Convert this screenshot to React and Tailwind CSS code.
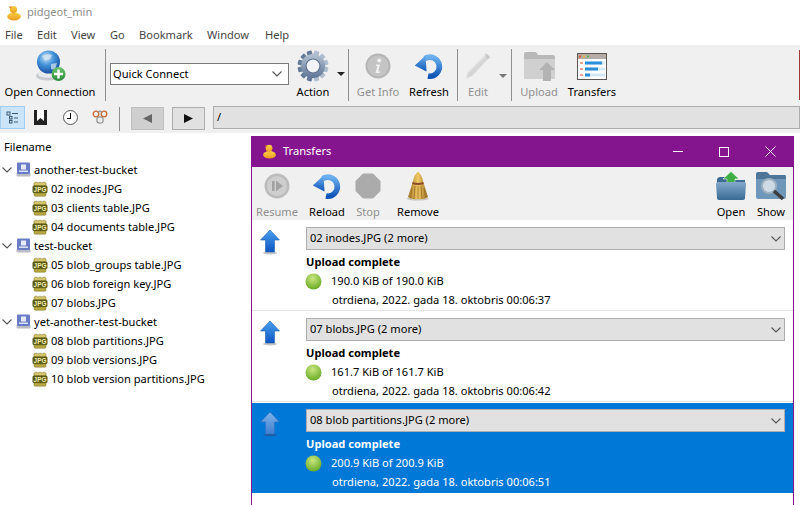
import React from "react";

const font = { fontFamily: '"Noto Sans", "Open Sans", sans-serif' };

function Duck({ size = 16 }) {
  return (
    <svg width={size} height={size} viewBox="0 0 16 16">
      <defs>
        <linearGradient id="duckBody" x1="0" y1="0" x2="0" y2="1">
          <stop offset="0" stopColor="#fbd34b" />
          <stop offset="1" stopColor="#eb9a1c" />
        </linearGradient>
      </defs>
      <ellipse cx="8" cy="11.5" rx="6.8" ry="4" fill="url(#duckBody)" />
      <circle cx="7.5" cy="4.5" r="3.6" fill="url(#duckBody)" />
      <path d="M4.5 3.5 L2.6 1.8 L5.8 1.5 Z" fill="#e2701b" />
      <path d="M6.5 8 L9 8 L9.5 10 L6 10 Z" fill="#f4b830" />
    </svg>
  );
}

function GlobeIcon() {
  return (
    <svg width="32" height="32" viewBox="0 0 32 32">
      <defs>
        <radialGradient id="globeFill" cx="0.4" cy="0.3" r="0.8">
          <stop offset="0" stopColor="#c6e2f7" />
          <stop offset="0.45" stopColor="#3f8fd8" />
          <stop offset="1" stopColor="#0f3f8f" />
        </radialGradient>
        <linearGradient id="plusFill" x1="0" y1="0" x2="0" y2="1">
          <stop offset="0" stopColor="#6cc36a" />
          <stop offset="1" stopColor="#2b8a3e" />
        </linearGradient>
      </defs>
      <ellipse cx="14" cy="26" rx="12" ry="4.5" fill="#c5cacf" />
      <ellipse cx="14" cy="24.5" rx="10" ry="3.2" fill="#e8ebee" />
      <circle cx="14.5" cy="12" r="11.5" fill="url(#globeFill)" />
      <path d="M8 6 Q13 3 18 5 L16 9 L11 11 Z M17 14 L23 13 L21 20 L17 19 Z" fill="#dce8f0" opacity="0.7" />
      <circle cx="24.5" cy="24" r="7" fill="url(#plusFill)" />
      <path d="M24.5 19.5 V28.5 M20 24 H29" stroke="#fff" strokeWidth="2.4" />
    </svg>
  );
}

function GearIcon() {
  const teeth = [0, 30, 60, 90, 120, 150];
  return (
    <svg width="32" height="32" viewBox="0 0 32 32">
      <defs>
        <linearGradient id="gearFill" x1="0" y1="0" x2="0" y2="1">
          <stop offset="0" stopColor="#b4c2d3" />
          <stop offset="1" stopColor="#5f7696" />
        </linearGradient>
      </defs>
      {teeth.map((a) => (
        <rect key={a} x="13.4" y="0.5" width="5.2" height="31" rx="1" fill="url(#gearFill)" transform={`rotate(${a + 15} 16 16)`} />
      ))}
      <circle cx="16" cy="16" r="12" fill="url(#gearFill)" />
      <circle cx="16" cy="16" r="7" fill="#f2f4f7" stroke="#5d7190" strokeWidth="1.2" />
    </svg>
  );
}

function InfoIcon() {
  return (
    <svg width="26" height="26" viewBox="0 0 26 26">
      <circle cx="13" cy="13" r="12.5" fill="#b5b5b5" />
      <circle cx="13" cy="13" r="10.5" fill="#c4c4c4" />
      <circle cx="14.2" cy="7.5" r="2" fill="#f2f2f2" />
      <path d="M11 11.5 H15 L13.2 18.5 H15 L14.6 20 H10.6 L12.4 13 H10.8 Z" fill="#f2f2f2" />
    </svg>
  );
}

function RefreshIcon({ id }) {
  return (
    <svg width="30" height="28" viewBox="0 0 30 28">
      <defs>
        <linearGradient id={id} x1="0" y1="0" x2="0" y2="1">
          <stop offset="0" stopColor="#6cb0ee" />
          <stop offset="1" stopColor="#0f55b8" />
        </linearGradient>
      </defs>
      <path d="M11 6.5 A9.5 9.5 0 1 1 14 24" fill="none" stroke={`url(#${id})`} strokeWidth="5.6" />
      <path d="M0.8 13.5 L11.5 3.5 L12.5 19.5 Z" fill={`url(#${id})`} />
    </svg>
  );
}

function PencilIcon() {
  return (
    <svg width="28" height="28" viewBox="0 0 28 28">
      <path d="M22 1.5 L26 5 L8 24 L2 26.5 L4 20 Z" fill="#d6d6d6" />
      <path d="M22 1.5 L26 5 L24 7 L20 3.5 Z" fill="#c6c6c6" />
      <path d="M4 20 L22 3" stroke="#e6e6e6" strokeWidth="1.5" />
    </svg>
  );
}

function UploadFolderIcon() {
  return (
    <svg width="32" height="30" viewBox="0 0 32 30">
      <path d="M1 4 Q1 1 3 1 H12 Q14 1 15 4 H30 Q32 4 32 6 V26 Q32 28 30 28 H3 Q1 28 1 26 Z" fill="#b9b9b9" />
      <path d="M1 8 H32 V26 Q32 28 30 28 H3 Q1 28 1 26 Z" fill="#d0d0d0" />
      <path d="M24 11 L32 19 H28 V30 H20 V19 H16 Z" fill="#b3b3b3" />
    </svg>
  );
}

function TransfersIcon() {
  return (
    <svg width="30" height="27" viewBox="0 0 30 27">
      <rect x="0.5" y="0.5" width="29" height="26" fill="#fff" stroke="#5f5550" />
      <rect x="1" y="1" width="28" height="5" fill="#b5aca7" />
      <rect x="2" y="2.5" width="2" height="2" fill="#e5533d" />
      <rect x="6" y="2.5" width="2" height="2" fill="#e8b93c" />
      <rect x="10" y="2.5" width="2" height="2" fill="#58b948" />
      <rect x="3" y="9" width="3" height="2" fill="#e9a28f" />
      <rect x="3" y="15" width="3" height="2" fill="#e9a28f" />
      <rect x="3" y="21" width="3" height="2" fill="#e9a28f" />
      <rect x="8" y="8.5" width="20" height="3" fill="#d5e8f6" />
      <rect x="8" y="8.5" width="17" height="3" fill="#2c90d9" />
      <rect x="8" y="14.5" width="20" height="3" fill="#d5e8f6" />
      <rect x="8" y="14.5" width="13" height="3" fill="#2c90d9" />
      <rect x="8" y="20.5" width="20" height="3" fill="#d5e8f6" />
      <rect x="8" y="20.5" width="5" height="3" fill="#2c90d9" />
    </svg>
  );
}

function ResumeIcon() {
  return (
    <svg width="26" height="26" viewBox="0 0 26 26">
      <circle cx="13" cy="13" r="12.5" fill="#bcbcbc" />
      <circle cx="13" cy="13" r="10" fill="#cecece" />
      <rect x="8" y="8" width="2.6" height="10" fill="#a3a3a3" />
      <path d="M12 7.5 L19 13 L12 18.5 Z" fill="#a3a3a3" />
    </svg>
  );
}

function StopIcon() {
  return (
    <svg width="26" height="26" viewBox="0 0 26 26">
      <path d="M8 0.5 H18 L25.5 8 V18 L18 25.5 H8 L0.5 18 V8 Z" fill="#ababab" />
    </svg>
  );
}

function BroomIcon() {
  return (
    <svg width="24" height="30" viewBox="0 0 24 30">
      <defs>
        <linearGradient id="broomFill" x1="0" y1="0" x2="1" y2="0">
          <stop offset="0" stopColor="#a5762a" />
          <stop offset="0.5" stopColor="#f0c863" />
          <stop offset="1" stopColor="#9f6f25" />
        </linearGradient>
      </defs>
      <ellipse cx="12" cy="27.5" rx="11" ry="2" fill="#c9c5bd" />
      <path d="M12 0.5 Q16 4 17 10 L22 26 Q17 29 12 28 Q6 29 2 26 L7 10 Q8 4 12 0.5 Z" fill="url(#broomFill)" />
      <path d="M6.8 11 Q12 13 17.2 11 L17.8 13 Q12 15 6.2 13 Z" fill="#8a4b2a" />
      <path d="M6 17 L4.5 27 M9 15 L8 28 M12 15 V28 M15 15 L16 28 M18 17 L19.5 27" stroke="#8d6421" strokeWidth="0.7" />
    </svg>
  );
}

function OpenFolderIcon() {
  return (
    <svg width="32" height="30" viewBox="0 0 32 30">
      <defs>
        <linearGradient id="openFolderFill" x1="0" y1="0" x2="0" y2="1">
          <stop offset="0" stopColor="#83a9cb" />
          <stop offset="1" stopColor="#386a94" />
        </linearGradient>
      </defs>
      <path d="M2 8 Q3 6 5 6 H11 L13 9 H30 V14 H2 Z" fill="#3d6b91" />
      <path d="M16 0.5 L24 8 H20 V15 H12 V8 H8 Z" fill="#3fae45" stroke="#e8f5e8" strokeWidth="0.6" />
      <path d="M1 13 Q1 11 3 11 H29 Q31 11 31 13 L30 27 Q30 29 28 29 H4 Q2 29 2 27 Z" fill="url(#openFolderFill)" />
    </svg>
  );
}

function ShowFolderIcon() {
  return (
    <svg width="32" height="30" viewBox="0 0 32 30">
      <path d="M1 3 Q1 1 3 1 H12 L15 4 H30 Q31 4 31 6 V10 H1 Z" fill="#4d7698" />
      <path d="M1 8 H31 V26 Q31 28 29 28 H3 Q1 28 1 26 Z" fill="#6f97b9" />
      <circle cx="14" cy="15" r="7" fill="#cfdbe4" stroke="#9fb2c1" strokeWidth="2" />
      <path d="M19 20 L28 28" stroke="#3c3c3c" strokeWidth="3.4" />
    </svg>
  );
}

function DiskIcon() {
  return (
    <svg width="15" height="15" viewBox="0 0 15 15">
      <rect x="0.5" y="11" width="14" height="3.5" rx="1" fill="#b9bcc4" />
      <rect x="1" y="0.5" width="13" height="11.5" rx="1" fill="#6a7cc6" />
      <rect x="5" y="2.5" width="5" height="5" fill="#e6eaf8" />
      <rect x="3" y="8.5" width="9" height="1.4" fill="#e6eaf8" />
    </svg>
  );
}

function JpgIcon() {
  return (
    <svg width="16" height="16" viewBox="0 0 16 16">
      <path d="M2 5 V2 L4 1 L6 2 L8 1 L10 2 L12 1 L14 2 V5 Z" fill="#d6c76d" stroke="#8a8238" strokeWidth="0.6" />
      <rect x="0.5" y="4.5" width="15" height="7.5" rx="1.5" fill="#5a5a12" />
      <text x="8" y="10.7" textAnchor="middle" fontSize="6.4" fontWeight="700" fill="#f3efb5" fontFamily="Liberation Sans, sans-serif">JPG</text>
      <path d="M2 12 H14 V14 Q14 15.2 12.5 15.2 H3.5 Q2 15.2 2 14 Z" fill="#b6a83f" stroke="#7b7228" strokeWidth="0.5" />
    </svg>
  );
}

function UpArrow({ muted }) {
  const top = muted ? "#7fb4ea" : "#4aa1f0";
  const bottom = muted ? "#3f7fd0" : "#0d55c0";
  const gid = muted ? "arrowMuted" : "arrowBlue";
  return (
    <svg width="20" height="26" viewBox="0 0 20 26">
      <defs>
        <linearGradient id={gid} x1="0" y1="0" x2="0" y2="1">
          <stop offset="0" stopColor={top} />
          <stop offset="1" stopColor={bottom} />
        </linearGradient>
      </defs>
      <ellipse cx="10" cy="24" rx="7" ry="1.5" fill={muted ? "#1b5ea6" : "#c5c5c5"} />
      <path d="M10 1 L19.5 11 H14.5 V23 H5.5 V11 H0.5 Z" fill={`url(#${gid})`} stroke={muted ? "#2d70c2" : "#1b5fb5"} strokeWidth="0.6" />
    </svg>
  );
}

function GreenDot() {
  return (
    <svg width="17" height="17" viewBox="0 0 17 17">
      <defs>
        <radialGradient id="dotFill" cx="0.45" cy="0.3" r="0.8">
          <stop offset="0" stopColor="#c9e67e" />
          <stop offset="1" stopColor="#5da31c" />
        </radialGradient>
      </defs>
      <circle cx="8.5" cy="8.5" r="8" fill="url(#dotFill)" />
    </svg>
  );
}

function Chevron({ className = "", color = "#555" }) {
  return (
    <svg width="10" height="6" viewBox="0 0 10 6" className={className}>
      <path d="M0.5 0.5 L5 5 L9.5 0.5" fill="none" stroke={color} strokeWidth="1.1" />
    </svg>
  );
}

function Sep({ className = "" }) {
  return <div className={`w-px bg-[#8f8f8f] shrink-0 ${className}`} />;
}

function ToolBtn({ label, disabled, className = "", children }) {
  return (
    <div className={`flex flex-col items-center shrink-0 ${className}`}>
      <div className="h-[36px] flex items-center justify-center">{children}</div>
      <span className={`text-[11.1px] leading-[16px] whitespace-nowrap ${disabled ? "text-[#8f8f8f]" : "text-black"}`}>
        {label}
      </span>
    </div>
  );
}

function MiniArrow({ color }) {
  return (
    <svg width="8" height="4" viewBox="0 0 8 4">
      <path d="M0 0 H8 L4 4 Z" fill={color} />
    </svg>
  );
}

const tree = [
  { name: "another-test-bucket", files: ["02 inodes.JPG", "03 clients table.JPG", "04 documents table.JPG"] },
  { name: "test-bucket", files: ["05 blob_groups table.JPG", "06 blob foreign key.JPG", "07 blobs.JPG"] },
  { name: "yet-another-test-bucket", files: ["08 blob partitions.JPG", "09 blob versions.JPG", "10 blob version partitions.JPG"] },
];

const transfers = [
  { title: "02 inodes.JPG (2 more)", size: "190.0 KiB of 190.0 KiB", date: "otrdiena, 2022. gada 18. oktobris 00:06:37" },
  { title: "07 blobs.JPG (2 more)", size: "161.7 KiB of 161.7 KiB", date: "otrdiena, 2022. gada 18. oktobris 00:06:42" },
  { title: "08 blob partitions.JPG (2 more)", size: "200.9 KiB of 200.9 KiB", date: "otrdiena, 2022. gada 18. oktobris 00:06:51", selected: true },
];

function TransferRow({ item }) {
  const sel = item.selected;
  return (
    <div className={`flex shrink-0 ${sel ? "bg-[#0078d7] text-white h-[90px] mt-px" : "h-[91px] border-b border-[#e6e6e6]"}`}>
      <div className={`w-[54px] pl-[8px] shrink-0 ${sel ? "pt-[8px]" : "pt-[9px]"}`}>
        <UpArrow muted={sel} />
      </div>
      <div className={`flex-1 pr-[8px] min-w-0 ${sel ? "pt-[6px]" : "pt-[7px]"}`}>
        <div className="h-[23px] bg-[#e1e1e1] border border-[#adadad] flex items-center justify-between pl-[3px] pr-[3px] text-black">
          <span className="text-[11.1px]">{item.title}</span>
          <Chevron />
        </div>
        <div className="text-[11.1px] font-bold leading-[16px] mt-[4px]">Upload complete</div>
        <div className="flex mt-[2px] h-[19px] items-center">
          <div className="w-[26px] -ml-px shrink-0">
            <GreenDot />
          </div>
          <span className="text-[11.1px]">{item.size}</span>
        </div>
        <div className="text-[11.1px] leading-[16px] pl-[26px] mt-[1px]">{item.date}</div>
      </div>
    </div>
  );
}

export default function App() {
  return (
    <div className="relative w-[800px] h-[505px] overflow-hidden bg-white text-black" style={font}>
      {/* titlebar */}
      <div className="h-[25px] flex items-center pl-[6px] gap-[5px]">
        <Duck />
        <span className="text-[11.1px] text-[#8c8c8c]">pidgeot_min</span>
      </div>

      {/* menu */}
      <div className="h-[20px] flex items-center text-[11.1px] text-[#444] pl-[5px]">
        <span className="w-[32px]">File</span>
        <span className="w-[34px]">Edit</span>
        <span className="w-[39px]">View</span>
        <span className="w-[29px]">Go</span>
        <span className="w-[68px]">Bookmark</span>
        <span className="w-[58px]">Window</span>
        <span>Help</span>
      </div>

      {/* toolbar */}
      <div className="h-[88px] bg-[#f0f0f0]">
        <div className="h-[55px] flex relative pt-[3px]">
          <ToolBtn label="Open Connection" className="w-[100px]">
            <GlobeIcon />
          </ToolBtn>
          <Sep className="ml-[5px] mt-px h-[52px]" />
          <div className="ml-[4px] mt-[15px] w-[179px] h-[22px] bg-white border border-[#7a7a7a] flex items-center justify-between pl-[2px] pr-[6px] shrink-0">
            <span className="text-[11.1px]">Quick Connect</span>
            <Chevron />
          </div>
          <ToolBtn label="Action" className="ml-[6px] w-[36px]">
            <GearIcon />
          </ToolBtn>
          <div className="w-[17px] pl-[6px] pt-[24px] shrink-0">
            <MiniArrow color="#222" />
          </div>
          <Sep className="mt-px h-[52px]" />
          <ToolBtn label="Get Info" disabled className="ml-[4px] w-[50px]">
            <InfoIcon />
          </ToolBtn>
          <ToolBtn label="Refresh" className="ml-[1px] w-[50px]">
            <RefreshIcon id="refreshMain" />
          </ToolBtn>
          <Sep className="ml-[3px] mt-px h-[52px]" />
          <ToolBtn label="Edit" disabled className="w-[40px]">
            <PencilIcon />
          </ToolBtn>
          <div className="w-[13px] pl-[1px] pt-[26px] shrink-0">
            <MiniArrow color="#777" />
          </div>
          <Sep className="mt-px h-[52px]" />
          <ToolBtn label="Upload" disabled className="ml-[2px] w-[50px]">
            <UploadFolderIcon />
          </ToolBtn>
          <ToolBtn label="Transfers" className="ml-[2px] w-[52px]">
            <TransfersIcon />
          </ToolBtn>
          <div className="absolute right-0 top-[5px] w-px h-[50px] bg-[#a33a3a]" />
        </div>

        {/* second toolbar */}
        <div className="h-[33px] flex items-start pt-[6px]">
          <div className="w-[25px] h-[23px] bg-[#cce4f7] border border-[#a3cdee] flex items-center justify-center shrink-0">
            <svg width="13" height="13" viewBox="0 0 13 13" fill="none" stroke="#3b5a70">
              <rect x="1" y="1" width="3" height="3" />
              <path d="M6 2.5 H12" />
              <rect x="3.5" y="5.5" width="2.5" height="2.5" />
              <path d="M8 7 H12" />
              <rect x="3.5" y="9.5" width="2.5" height="2.5" />
              <path d="M8 11 H12" />
            </svg>
          </div>
          <div className="ml-[9px] w-[13px] h-[15px] mt-[4px] bg-[#222] flex justify-center shrink-0">
            <svg width="7" height="11" viewBox="0 0 7 11">
              <path d="M0 0 H7 V11 L3.5 8 L0 11 Z" fill="#fff" />
            </svg>
          </div>
          <div className="ml-[16px] mt-[4px] w-[15px] h-[15px] rounded-full border border-[#555] bg-white relative shrink-0">
            <div className="absolute left-[6px] top-[2px] w-px h-[5px] bg-black" />
            <div className="absolute left-[3px] top-[7px] w-[4px] h-px bg-black" />
          </div>
          <svg width="16" height="16" viewBox="0 0 16 16" fill="none" stroke="#c76b36" strokeWidth="1.3" className="ml-[14px] mt-[3px] shrink-0">
            <circle cx="4" cy="5" r="2.8" fill="#eee" />
            <circle cx="12" cy="5" r="2.8" fill="#eee" />
            <circle cx="8" cy="11" r="3.2" fill="#eee" stroke="#999" />
            <path d="M6 3 Q8 1.5 10 3" stroke="#999" />
          </svg>
          <Sep className="ml-[11px] mt-[1px] h-[24px]" />
          <div className="ml-[11px] mt-[1px] w-[33px] h-[23px] bg-[#cfcfcf] border border-[#c0c0c0] flex items-center justify-center shrink-0">
            <svg width="9" height="9" viewBox="0 0 9 9">
              <path d="M9 0 V9 L0 4.5 Z" fill="#666" />
            </svg>
          </div>
          <div className="ml-[8px] mt-[1px] w-[33px] h-[23px] bg-[#e1e1e1] border border-[#adadad] flex items-center justify-center shrink-0">
            <svg width="9" height="9" viewBox="0 0 9 9">
              <path d="M0 0 V9 L9 4.5 Z" fill="#111" />
            </svg>
          </div>
          <div className="ml-[8px] flex-1 h-[23px] bg-[#e1e1e1] border border-[#adadad] pl-[3px] flex items-center text-[11.1px]">/</div>
        </div>
      </div>

      {/* file tree */}
      <div className="pt-[4px] pl-[4px] text-[11.1px] leading-[19px]">
        <div className="mb-[4px]">Filename</div>
        {tree.map((bucket) => (
          <div key={bucket.name}>
            <div className="h-[19px] flex items-center -ml-[2px]">
              <Chevron className="mr-[4px]" />
              <DiskIcon />
              <span className="ml-[3px]">{bucket.name}</span>
            </div>
            {bucket.files.map((file) => (
              <div key={file} className="h-[19px] flex items-center pl-[28px]">
                <JpgIcon />
                <span className="ml-[3px]">{file}</span>
              </div>
            ))}
          </div>
        ))}
      </div>

      {/* transfers window */}
      <div className="absolute left-[251px] top-[136px] w-[543px] h-[369px] bg-white border-x border-[#85158e] flex flex-col">
        <div className="h-[31px] bg-[#85158e] flex items-center pl-[10px] text-white shrink-0">
          <Duck size={15} />
          <span className="ml-[6px] text-[11.1px]">Transfers</span>
          <div className="ml-auto flex items-center">
            <div className="w-[46px] flex justify-center">
              <div className="w-[10px] h-px bg-white" />
            </div>
            <div className="w-[46px] flex justify-center">
              <div className="w-[10px] h-[10px] border border-white" />
            </div>
            <div className="w-[46px] flex justify-center">
              <svg width="11" height="11" viewBox="0 0 11 11" stroke="#fff" strokeWidth="1">
                <path d="M0.5 0.5 L10.5 10.5 M10.5 0.5 L0.5 10.5" />
              </svg>
            </div>
          </div>
        </div>
        <div className="h-[53px] bg-[#f0f0f0] flex pt-[1px] shrink-0">
          <ToolBtn label="Resume" disabled className="w-[50px]">
            <ResumeIcon />
          </ToolBtn>
          <ToolBtn label="Reload" className="w-[50px]">
            <RefreshIcon id="refreshReload" />
          </ToolBtn>
          <ToolBtn label="Stop" disabled className="w-[32px]">
            <StopIcon />
          </ToolBtn>
          <ToolBtn label="Remove" className="ml-[8px] w-[52px]">
            <BroomIcon />
          </ToolBtn>
          <div className="flex-1" />
          <ToolBtn label="Open" className="w-[38px]">
            <OpenFolderIcon />
          </ToolBtn>
          <ToolBtn label="Show" className="ml-[2px] mr-[3px] w-[38px]">
            <ShowFolderIcon />
          </ToolBtn>
        </div>
        {transfers.map((item) => (
          <TransferRow key={item.title} item={item} />
        ))}
      </div>
    </div>
  );
}
